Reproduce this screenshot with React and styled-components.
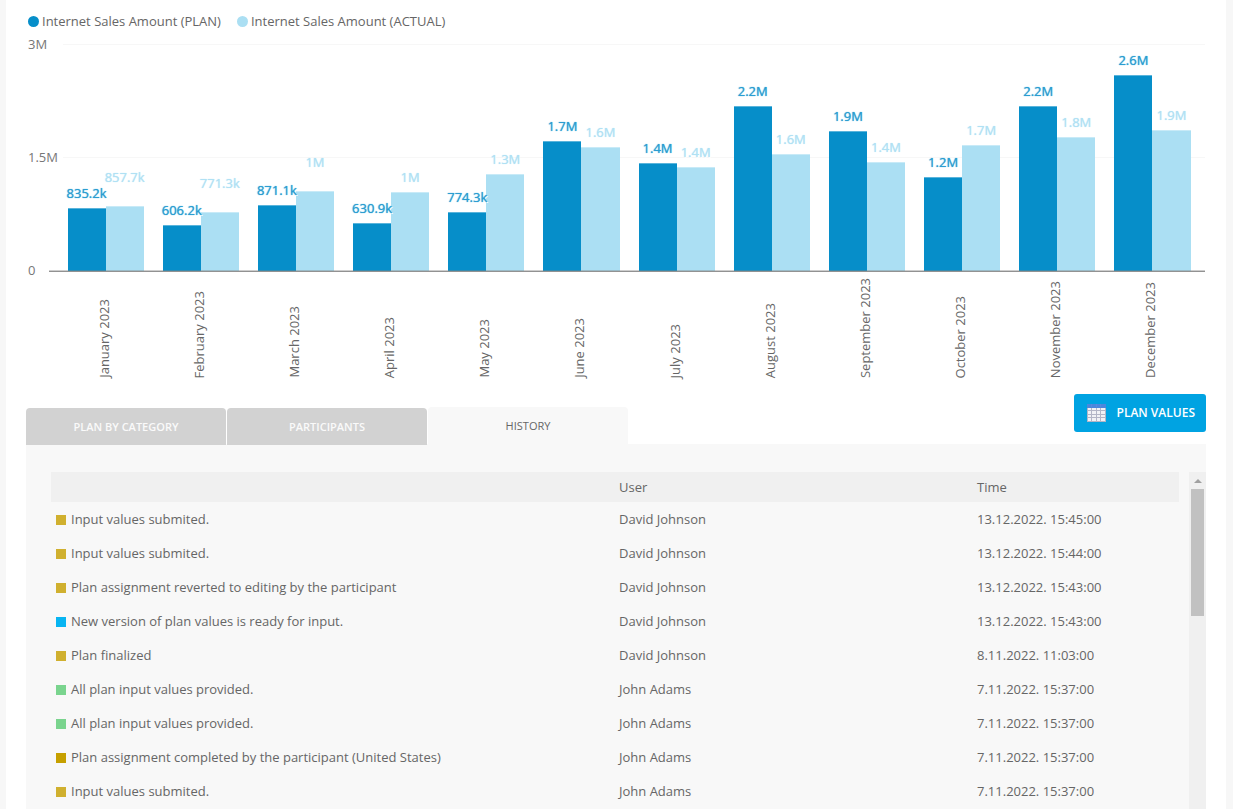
import React from "react";
import styled, { createGlobalStyle } from "styled-components";

const PLAN = "#068ec9";
const ACTUAL = "#abdff3";
const GOLD = "#d0b02f";
const BLUE = "#08b5f2";
const GREEN = "#7ad48e";
const DARK_GOLD = "#c6a000";

const AXIS_MAX = 3000;
const PLOT_HEIGHT = 226;

const months = [
  { name: "January 2023", plan: 835.2, actual: 857.7, raised: true },
  { name: "February 2023", plan: 606.2, actual: 771.3, raised: true },
  { name: "March 2023", plan: 871.1, actual: 1049, raised: true },
  { name: "April 2023", plan: 630.9, actual: 1042 },
  { name: "May 2023", plan: 774.3, actual: 1281 },
  { name: "June 2023", plan: 1719, actual: 1639 },
  { name: "July 2023", plan: 1427, actual: 1374 },
  { name: "August 2023", plan: 2184, actual: 1552 },
  { name: "September 2023", plan: 1853, actual: 1440 },
  { name: "October 2023", plan: 1241, actual: 1666 },
  { name: "November 2023", plan: 2184, actual: 1772 },
  { name: "December 2023", plan: 2595, actual: 1865 },
];

const history = [
  { color: GOLD, text: "Input values submited.", user: "David Johnson", time: "13.12.2022. 15:45:00" },
  { color: GOLD, text: "Input values submited.", user: "David Johnson", time: "13.12.2022. 15:44:00" },
  { color: GOLD, text: "Plan assignment reverted to editing by the participant", user: "David Johnson", time: "13.12.2022. 15:43:00" },
  { color: BLUE, text: "New version of plan values is ready for input.", user: "David Johnson", time: "13.12.2022. 15:43:00" },
  { color: GOLD, text: "Plan finalized", user: "David Johnson", time: "8.11.2022. 11:03:00" },
  { color: GREEN, text: "All plan input values provided.", user: "John Adams", time: "7.11.2022. 15:37:00" },
  { color: GREEN, text: "All plan input values provided.", user: "John Adams", time: "7.11.2022. 15:37:00" },
  { color: DARK_GOLD, text: "Plan assignment completed by the participant (United States)", user: "John Adams", time: "7.11.2022. 15:37:00" },
  { color: GOLD, text: "Input values submited.", user: "John Adams", time: "7.11.2022. 15:37:00" },
];

const formatValue = (v) =>
  v >= 1000 ? `${(v / 1000).toFixed(1).replace(".0", "")}M` : `${v.toFixed(1)}k`;

const barHeight = (v) => Math.ceil((v * PLOT_HEIGHT) / AXIS_MAX);

const GlobalStyle = createGlobalStyle`
  *, *::before, *::after { box-sizing: border-box; }
  body {
    margin: 0;
    background: #f7f7f7;
    color: #666;
    font: 13px/18px "Open Sans", "Noto Sans", sans-serif;
  }
`;

const Page = styled.main`
  display: flex;
  flex-direction: column;
  min-height: 100vh;
  margin: 0 7px 0 6px;
  padding: 12px 20px 0;
  background: #fff;
`;

const Legend = styled.ul`
  display: flex;
  gap: 16px;
  margin: 0;
  padding: 0 2px;
  list-style: none;
`;

const LegendItem = styled.li`
  display: flex;
  align-items: center;
  gap: 3px;
  white-space: nowrap;

  &::before {
    content: "";
    width: 11px;
    height: 11px;
    border-radius: 50%;
    background: ${(p) => p.$color};
  }
`;

const Stage = styled.div`
  display: grid;
  margin: 6px 1px 0 0;

  > * {
    grid-area: 1 / 1;
  }
`;

const Ticks = styled.div`
  display: flex;
  flex-direction: column;
  gap: 96px;
`;

const Tick = styled.div`
  display: flex;
  align-items: center;
  height: 17px;
  color: #777;

  span {
    width: 37px;
    padding: 0 0 2px 2px;
  }

  &:not(:last-child)::after {
    content: "";
    flex: 1;
    height: 1px;
    background: #f7f7f7;
  }
`;

const Columns = styled.div`
  display: flex;
  align-items: flex-end;
  margin-left: 32px;
  padding: 0 5px 8px 0;
`;

const Pair = styled.div`
  flex: 1 1 0;
  min-width: 0;
  display: flex;
  justify-content: center;
  align-items: flex-end;
`;

const BarSlot = styled.div`
  width: 40%;
  display: flex;
  flex-direction: column;
  align-items: center;
`;

const Bar = styled.div`
  width: 100%;
  border-top: 1px solid ${(p) => p.$edge};
  background: ${(p) => p.$color};
`;

const BarValue = styled.span`
  position: relative;
  z-index: 1;
  height: 18px;
  margin-bottom: ${(p) => (p.$raised ? 20 : 6)}px;
  color: ${(p) => p.$color};
  font-weight: 500;
  white-space: nowrap;
  text-shadow: 0 0 1px ${(p) => p.$color}, 1px 1px 0 #fff;
`;

const Axis = styled.div`
  z-index: 1;
  align-self: end;
  height: 2px;
  margin: 0 0 7px 23px;
  border-top: 1px solid rgba(130, 130, 130, 0.4);
  border-bottom: 1px solid #929292;
`;

const MonthLabels = styled.div`
  display: flex;
  align-items: flex-end;
  height: 99px;
  margin: 0 8px 0 30px;
`;

const MonthLabel = styled.div`
  flex: 1 1 0;
  min-width: 0;
  display: flex;
  justify-content: center;

  span {
    writing-mode: vertical-rl;
    transform: rotate(180deg);
    white-space: nowrap;
  }
`;

const Toolbar = styled.div`
  position: relative;
  z-index: 1;
  display: flex;
  justify-content: space-between;
  height: 51px;
  margin: 16px 0 -1px;
`;

const Tabs = styled.div`
  display: flex;
  align-items: flex-end;
  gap: 1px;
`;

const Tab = styled.button`
  width: 200px;
  height: ${(p) => (p.$active ? 38 : 37)}px;
  padding: 0;
  border: 0;
  border-radius: 4px 4px 0 0;
  background: ${(p) => (p.$active ? "#f8f8f8" : "#d2d2d2")};
  color: ${(p) => (p.$active ? "#666" : "#fafafa")};
  font: ${(p) => (p.$active ? 400 : 600)} 11px/16px "Open Sans", "Noto Sans", sans-serif;
  cursor: pointer;
`;

const PrimaryButton = styled.button`
  display: flex;
  align-items: center;
  gap: 11px;
  height: 38px;
  padding: 0 11px 0 12px;
  border: 0;
  border-radius: 3px;
  background: #00a3e2;
  color: #fff;
  font: 600 12px/16px "Open Sans", "Noto Sans", sans-serif;
  white-space: nowrap;
  cursor: pointer;
`;

const Panel = styled.section`
  flex: 1;
  display: flex;
  gap: 10px;
  padding: 28px 0 0 25px;
  background: #f8f8f8;
`;

const TableWrap = styled.div`
  flex: 1;
  min-width: 0;
`;

const HistoryTable = styled.table`
  width: 100%;
  table-layout: fixed;
  border-collapse: collapse;

  th,
  td {
    height: 34px;
    padding: 0 5px;
    font-weight: 400;
    text-align: left;
    white-space: nowrap;
  }

  th {
    height: 30px;
    background: #f0f0f0;
  }

  th:nth-child(2) {
    width: 358px;
  }

  th:nth-child(3) {
    width: 207px;
  }
`;

const Entry = styled.div`
  display: flex;
  align-items: center;
  gap: 5px;

  &::before {
    content: "";
    width: 10px;
    height: 10px;
    margin-top: 2px;
    background: ${(p) => p.$color};
  }
`;

const ScrollTrack = styled.div`
  display: flex;
  flex-direction: column;
  align-items: center;
  width: 17px;
  background: #f0f0f0;
`;

const ScrollArrow = styled.div`
  height: 17px;
  padding-top: 7px;

  &::before {
    content: "";
    display: block;
    border: 4px solid transparent;
    border-top: 0;
    border-bottom-color: #a0a0a0;
  }
`;

const ScrollThumb = styled.div`
  width: 13px;
  height: 127px;
  background: #c1c1c1;
`;

function TableIcon() {
  return (
    <svg width="20" height="20" viewBox="0 0 20 20" aria-hidden="true">
      <rect x="1" y="1" width="19" height="18" fill="#b3b5c6" />
      <rect x="1" y="1" width="19" height="4" fill="#4b87dc" />
      <path d="M5.5 1v3M10.5 1v3M14.5 1v3" stroke="#5a8adc" strokeWidth="1" />
      {[5, 8, 12, 15].map((y) =>
        [2, 6, 11, 15].map((x) => (
          <rect key={`${x}-${y}`} x={x} y={y} width={x === 6 || x === 15 ? 4 : 3} height={y === 5 || y === 12 ? 2 : 3} fill="#f1f1f5" />
        ))
      )}
    </svg>
  );
}

function ValueBar({ value, color, labelColor, edge, raised }) {
  return (
    <BarSlot>
      <BarValue $color={labelColor} $raised={raised}>{formatValue(value)}</BarValue>
      <Bar $color={color} $edge={edge} style={{ height: barHeight(value) }} />
    </BarSlot>
  );
}

function SalesChart() {
  return (
    <section aria-label="Internet Sales Amount">
      <Legend>
        <LegendItem $color={PLAN}>Internet Sales Amount (PLAN)</LegendItem>
        <LegendItem $color={ACTUAL}>Internet Sales Amount (ACTUAL)</LegendItem>
      </Legend>
      <Stage>
        <Ticks>
          <Tick><span>3M</span></Tick>
          <Tick><span>1.5M</span></Tick>
          <Tick><span>0</span></Tick>
        </Ticks>
        <Columns>
          {months.map((m) => (
            <Pair key={m.name}>
              <ValueBar value={m.plan} color={PLAN} labelColor="#2a9dd1" edge="#5ab4db" />
              <ValueBar value={m.actual} color={ACTUAL} labelColor="#b0e1f4" edge="#c8eaf7" raised={m.raised} />
            </Pair>
          ))}
        </Columns>
        <Axis />
      </Stage>
      <MonthLabels>
        {months.map((m) => (
          <MonthLabel key={m.name}><span>{m.name}</span></MonthLabel>
        ))}
      </MonthLabels>
    </section>
  );
}

export default function App() {
  return (
    <>
      <GlobalStyle />
      <Page>
        <SalesChart />
        <Toolbar>
          <Tabs role="tablist">
            <Tab role="tab" aria-selected="false">PLAN BY CATEGORY</Tab>
            <Tab role="tab" aria-selected="false">PARTICIPANTS</Tab>
            <Tab role="tab" aria-selected="true" $active>HISTORY</Tab>
          </Tabs>
          <PrimaryButton type="button">
            <TableIcon />
            PLAN VALUES
          </PrimaryButton>
        </Toolbar>
        <Panel>
          <TableWrap>
            <HistoryTable>
              <thead>
                <tr>
                  <th />
                  <th>User</th>
                  <th>Time</th>
                </tr>
              </thead>
              <tbody>
                {history.map((row, i) => (
                  <tr key={i}>
                    <td><Entry $color={row.color}>{row.text}</Entry></td>
                    <td>{row.user}</td>
                    <td>{row.time}</td>
                  </tr>
                ))}
              </tbody>
            </HistoryTable>
          </TableWrap>
          <ScrollTrack>
            <ScrollArrow />
            <ScrollThumb />
          </ScrollTrack>
        </Panel>
      </Page>
    </>
  );
}
